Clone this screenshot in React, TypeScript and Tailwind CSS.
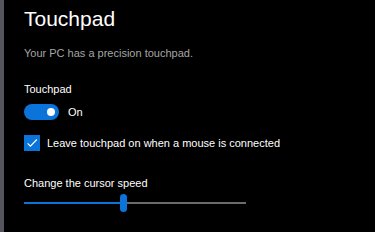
import React from "react";

export default function App() {
  return (
    <div className="flex h-[232px] w-[375px] overflow-hidden bg-black font-['Liberation_Sans',sans-serif]">
      <div className="w-[4px] shrink-0 bg-[#55555e]" />
      <div className="flex flex-col pl-[20px] pt-[3px]">
        <h1 className="text-[21px] font-normal leading-[32px] text-white">Touchpad</h1>
        <p className="mt-[10px] text-[11px] leading-[16px] text-[#a6a6a6]">
          Your PC has a precision touchpad.
        </p>

        <p className="mt-[20px] text-[11px] leading-[16px] text-white">Touchpad</p>
        <div className="mt-[7px] flex items-center gap-[9px]">
          <div className="flex h-[16px] w-[35px] items-center justify-end rounded-full bg-[#0a74da] pr-[4px]">
            <div className="h-[8px] w-[8px] rounded-full bg-white" />
          </div>
          <span className="text-[11px] leading-[16px] text-white">On</span>
        </div>

        <div className="mt-[15px] flex items-center gap-[7px]">
          <div className="flex h-[16px] w-[16px] items-center justify-center bg-[#0a74da]">
            <svg viewBox="0 0 16 16" className="h-[14px] w-[14px]">
              <path d="M3 8.5l3.2 3.2L13.5 4" fill="none" stroke="white" strokeWidth="1.3" />
            </svg>
          </div>
          <span className="text-[11px] leading-[16px] text-white">
            Leave touchpad on when a mouse is connected
          </span>
        </div>

        <p className="mt-[24px] text-[11px] leading-[16px] text-white">Change the cursor speed</p>
        <div className="relative mt-[2px] h-[20px] w-[222px]">
          <div className="absolute left-0 top-[9px] h-[2px] w-full bg-[#6b6b6b]" />
          <div className="absolute left-0 top-[9px] h-[2px] w-[98px] bg-[#0a74da]" />
          <div className="absolute left-[96px] top-[1px] h-[18px] w-[7px] rounded-full bg-[#0a74da]" />
        </div>
      </div>
    </div>
  );
}
